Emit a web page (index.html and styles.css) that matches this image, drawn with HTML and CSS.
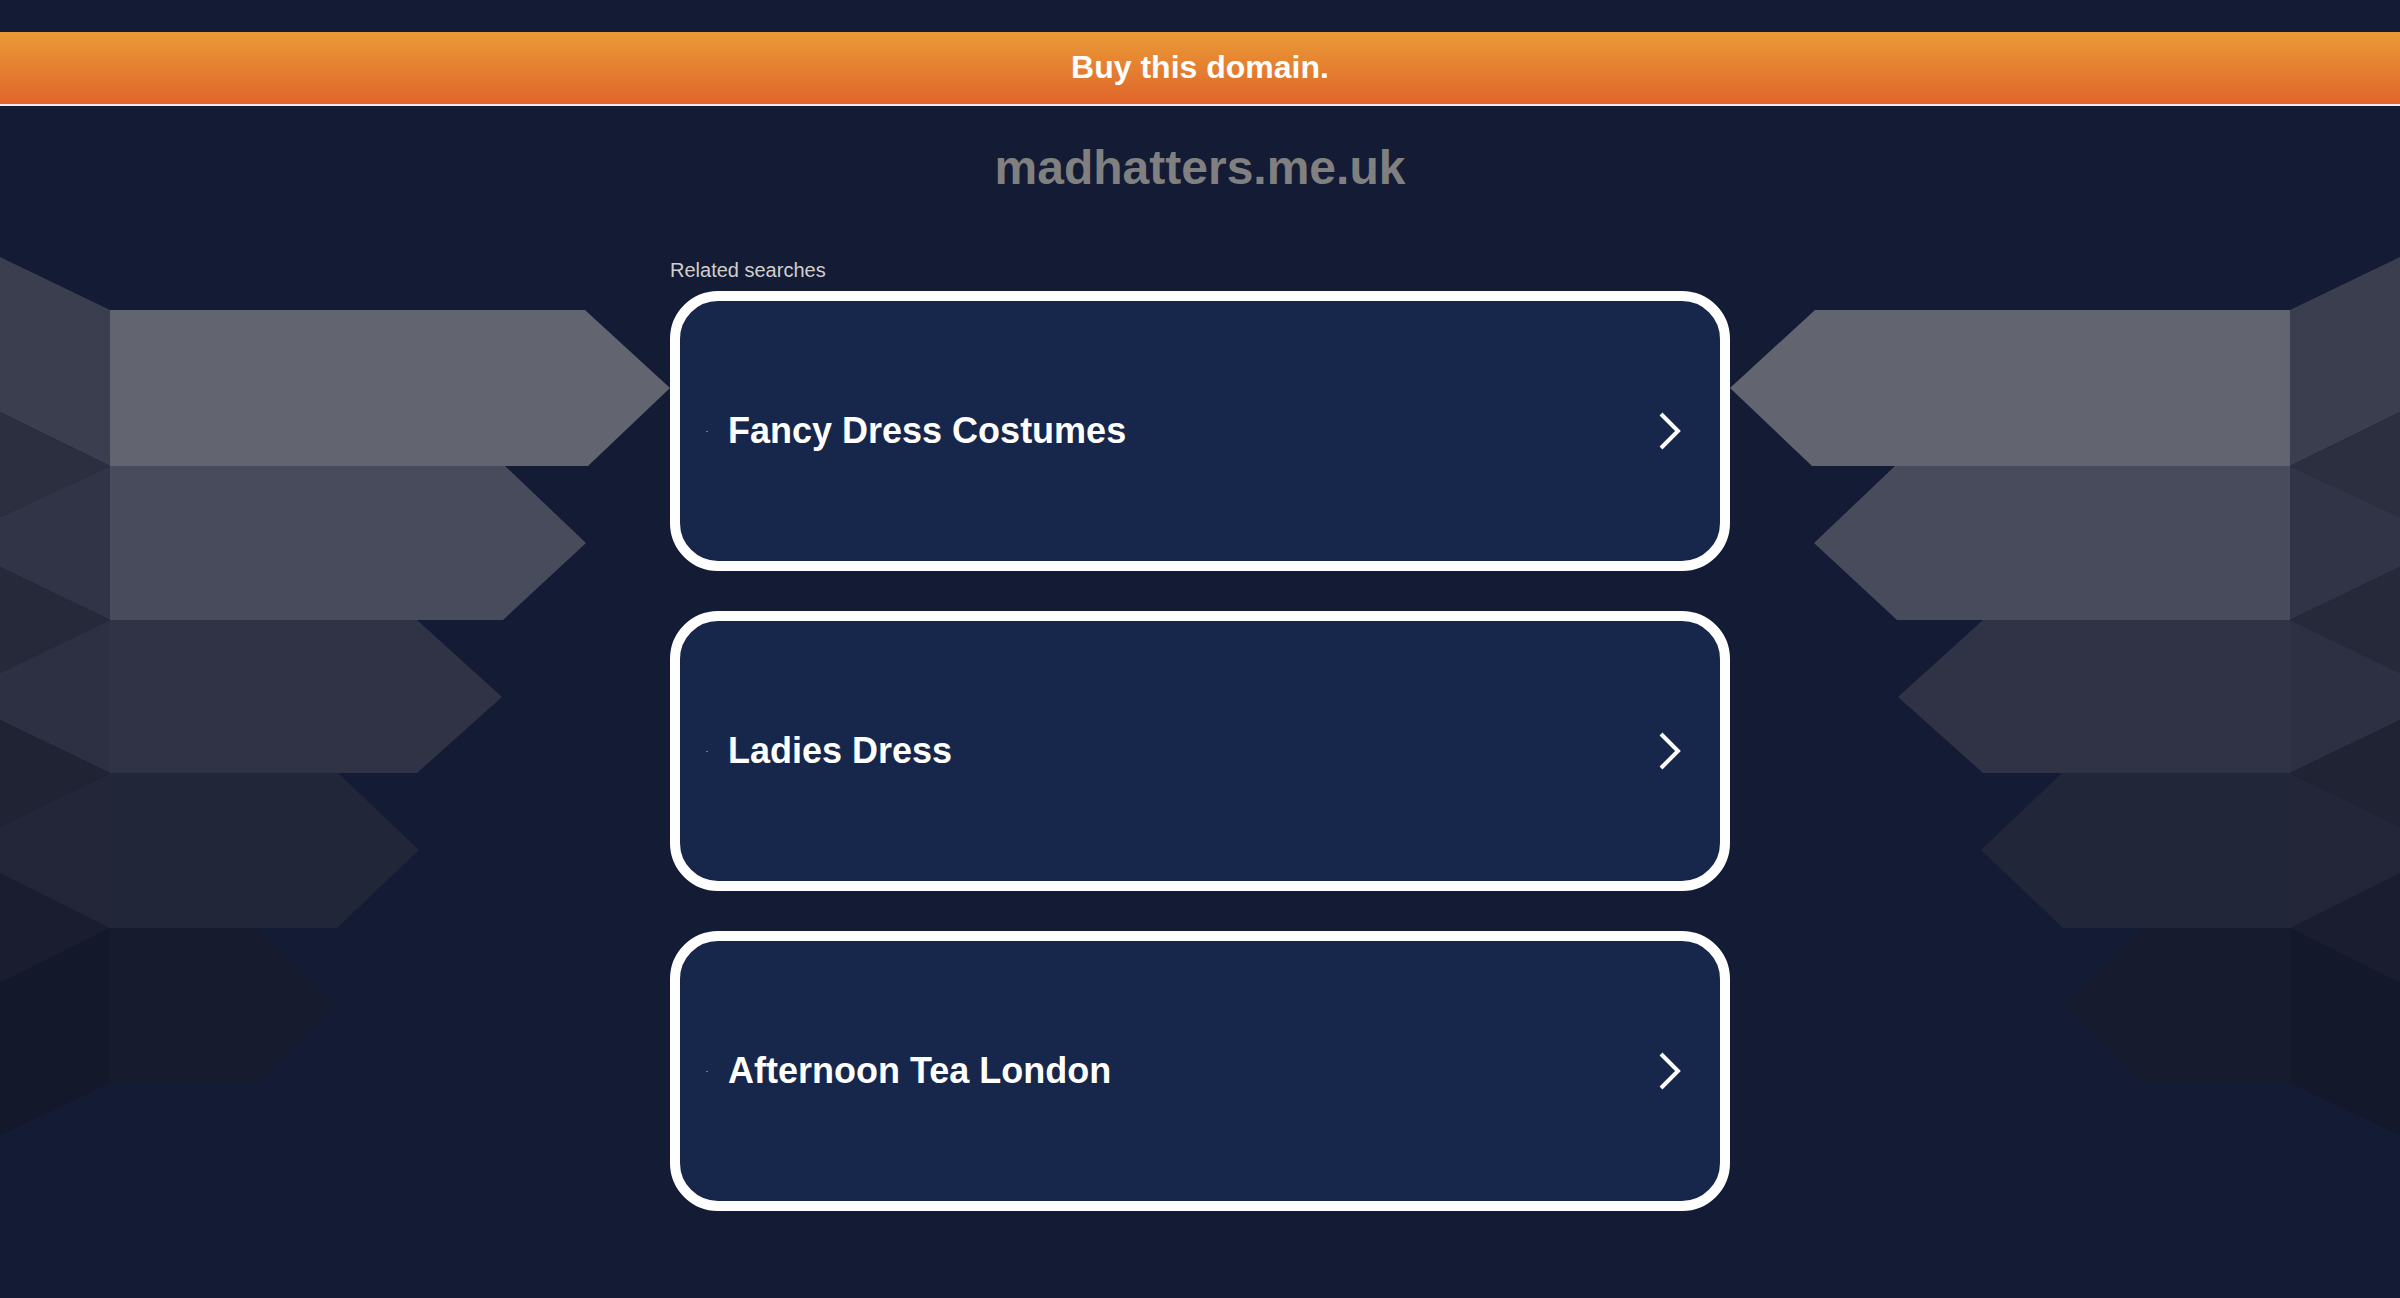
FILE: index.html
```html
<!DOCTYPE html>
<html lang="en">
<head>
<meta charset="utf-8">
<title>madhatters.me.uk</title>
<link rel="stylesheet" href="styles.css">
</head>
<body>
<div class="top-gap"></div>
<a class="buy-bar" href="#">Buy this domain.</a>
<h1 class="domain">madhatters.me.uk</h1>
<div class="stage">
  <svg class="deco" width="670" height="950" viewBox="0 206 670 950" aria-hidden="true">
    <polygon points="0,257 110,310 110,466 0,412" fill="#3b3e4f"/>
    <polygon points="0,412 110,466 0,517" fill="#2c2f40"/>
    <polygon points="0,517 110,466 110,620 0,567" fill="#313446"/>
    <polygon points="0,567 110,620 0,673" fill="#262939"/>
    <polygon points="0,673 110,620 110,773 0,720" fill="#2d3042"/>
    <polygon points="0,720 110,773 0,827" fill="#1f2334"/>
    <polygon points="0,827 110,773 110,928 0,873" fill="#222638"/>
    <polygon points="0,873 110,928 0,983" fill="#191d2f"/>
    <polygon points="0,983 110,928 110,1083 0,1135" fill="#13182a"/>
    <polygon points="110,310 585,310 670,388 588,466 110,466" fill="#62646f"/>
    <polygon points="110,466 505,466 586,543 503,620 110,620" fill="#484b5c"/>
    <polygon points="110,620 417,620 502,697 417,773 110,773" fill="#303345"/>
    <polygon points="110,773 338,773 419,850 337,928 110,928" fill="#212639"/>
    <polygon points="110,928 257,928 335,1005 257,1083 110,1083" fill="#161b2e"/>
  </svg>
  <main class="center">
    <div class="related">Related searches</div>
    <ul class="cards">
      <li><a class="card" href="#"><span class="dot"></span><span class="label">Fancy Dress Costumes</span><svg class="chev" width="26" height="40" viewBox="0 0 26 40"><polyline points="4,3 21,20 4,37" fill="none" stroke="#fff" stroke-width="4"/></svg></a></li>
      <li><a class="card" href="#"><span class="dot"></span><span class="label">Ladies Dress</span><svg class="chev" width="26" height="40" viewBox="0 0 26 40"><polyline points="4,3 21,20 4,37" fill="none" stroke="#fff" stroke-width="4"/></svg></a></li>
      <li><a class="card" href="#"><span class="dot"></span><span class="label">Afternoon Tea London</span><svg class="chev" width="26" height="40" viewBox="0 0 26 40"><polyline points="4,3 21,20 4,37" fill="none" stroke="#fff" stroke-width="4"/></svg></a></li>
    </ul>
  </main>
  <svg class="deco deco-right" width="670" height="950" viewBox="0 206 670 950" aria-hidden="true">
    <polygon points="0,257 110,310 110,466 0,412" fill="#3b3e4f"/>
    <polygon points="0,412 110,466 0,517" fill="#2c2f40"/>
    <polygon points="0,517 110,466 110,620 0,567" fill="#313446"/>
    <polygon points="0,567 110,620 0,673" fill="#262939"/>
    <polygon points="0,673 110,620 110,773 0,720" fill="#2d3042"/>
    <polygon points="0,720 110,773 0,827" fill="#1f2334"/>
    <polygon points="0,827 110,773 110,928 0,873" fill="#222638"/>
    <polygon points="0,873 110,928 0,983" fill="#191d2f"/>
    <polygon points="0,983 110,928 110,1083 0,1135" fill="#13182a"/>
    <polygon points="110,310 585,310 670,388 588,466 110,466" fill="#62646f"/>
    <polygon points="110,466 505,466 586,543 503,620 110,620" fill="#484b5c"/>
    <polygon points="110,620 417,620 502,697 417,773 110,773" fill="#303345"/>
    <polygon points="110,773 338,773 419,850 337,928 110,928" fill="#212639"/>
    <polygon points="110,928 257,928 335,1005 257,1083 110,1083" fill="#161b2e"/>
  </svg>
</div>
</body>
</html>
```

FILE: styles.css
```css
html, body {
  margin: 0;
  padding: 0;
}
body {
  background: #141b35;
  font-family: "Liberation Sans", Arial, Helvetica, sans-serif;
  min-height: 1298px;
  overflow: hidden;
}
.top-gap {
  height: 32px;
}
.buy-bar {
  display: block;
  height: 70px;
  padding-bottom: 2px;
  line-height: 70px;
  text-align: center;
  background: linear-gradient(to bottom, #ea9b36, #e0642a);
  border-bottom: 2px solid #eeeeee;
  color: #ffffff;
  font-weight: bold;
  font-size: 32px;
  text-decoration: none;
}
.domain {
  margin: 0;
  padding-top: 32px;
  padding-bottom: 8px;
  line-height: 60px;
  height: 60px;
  text-align: center;
  font-size: 48px;
  font-weight: bold;
  color: #808080;
}
.stage {
  display: flex;
  flex-direction: row;
  align-items: flex-start;
}
.deco {
  display: block;
  flex: 0 0 670px;
}
.deco-right {
  transform: scaleX(-1);
}
.center {
  flex: 0 0 1060px;
  display: flex;
  flex-direction: column;
}
.related {
  margin-top: 53px;
  height: 22px;
  line-height: 22px;
  font-size: 20px;
  color: #cfcfcf;
  margin-bottom: 10px;
}
.cards {
  list-style: none;
  margin: 0;
  padding: 0;
  display: flex;
  flex-direction: column;
  gap: 40px;
}
.card {
  box-sizing: border-box;
  height: 280px;
  display: flex;
  align-items: center;
  background: #17264b;
  border: 10px solid #ffffff;
  border-radius: 48px;
  padding-left: 26px;
  text-decoration: none;
  color: #ffffff;
}
.dot {
  width: 2px;
  height: 1px;
  background: #6f7890;
  margin-right: 20px;
  flex: 0 0 auto;
}
.label {
  flex: 1 1 auto;
  font-size: 36px;
  font-weight: bold;
  color: #ffffff;
}
.chev {
  display: block;
  flex: 0 0 auto;
  margin-right: 37px;
}
```
